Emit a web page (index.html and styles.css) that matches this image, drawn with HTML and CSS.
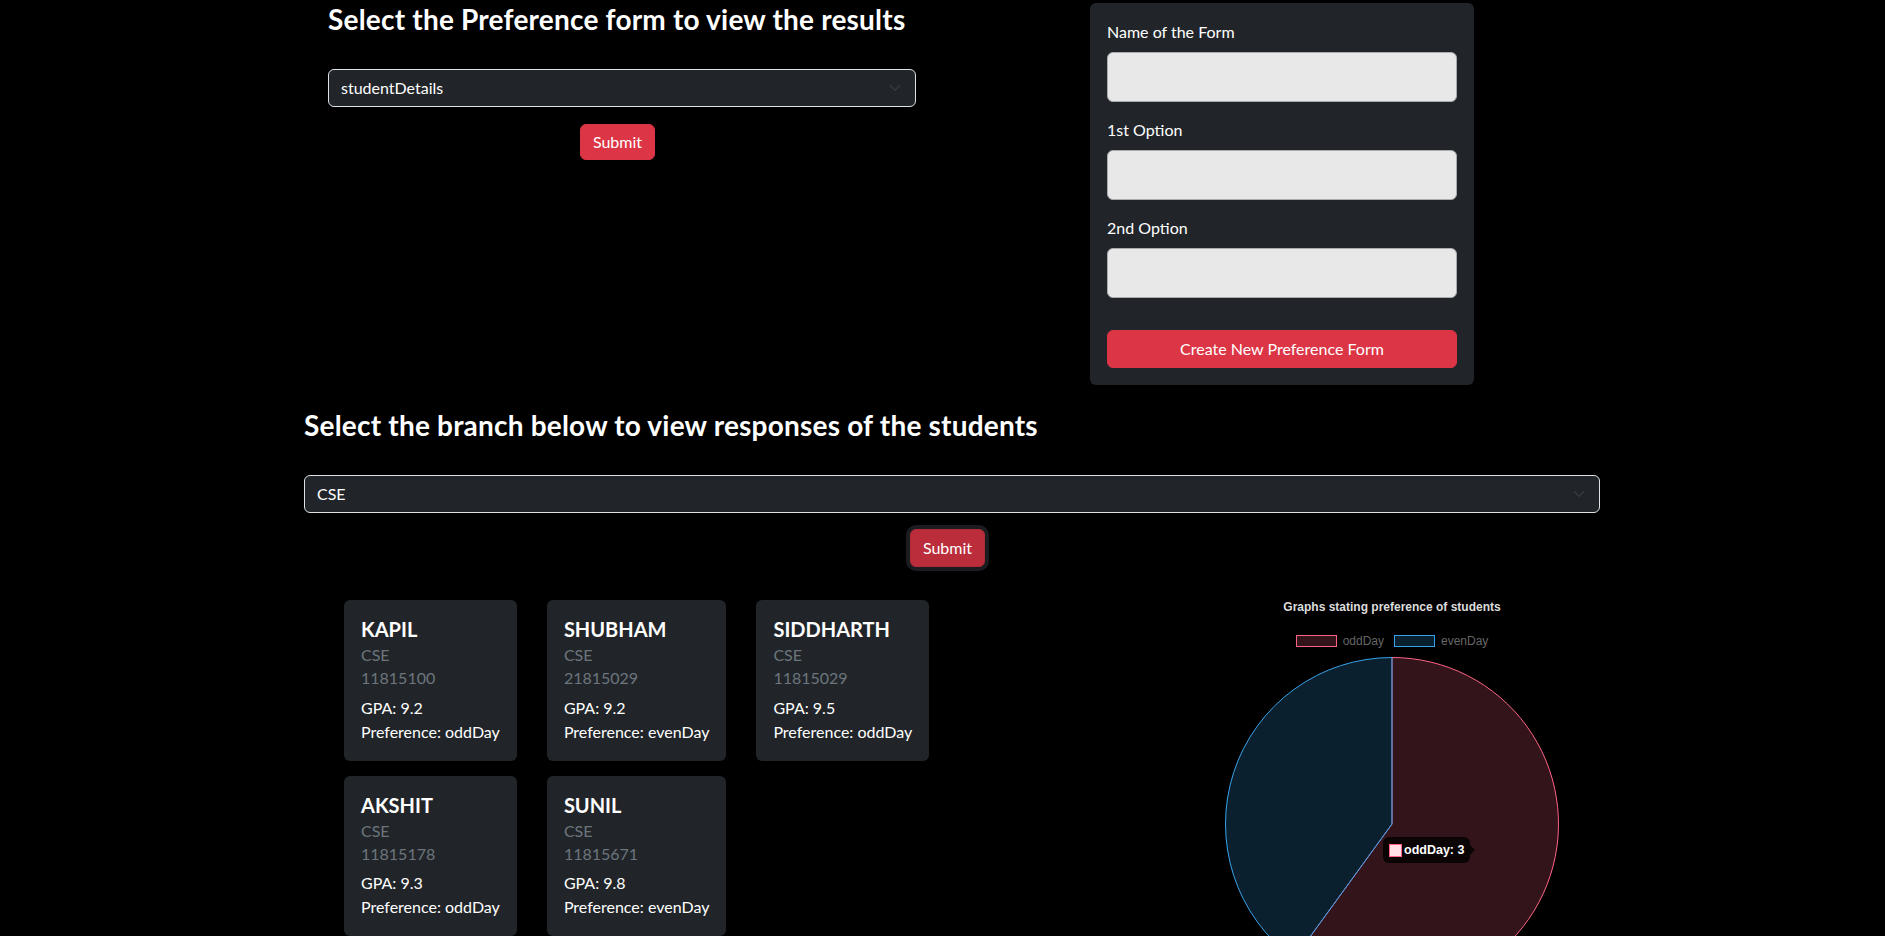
FILE: index.html
```html
<!DOCTYPE html>
<html lang="en">
<head>
<meta charset="utf-8">
<title>Preference Forms</title>
<link rel="stylesheet" href="styles.css">
</head>
<body>
<div class="top">
  <section class="pick">
    <h3 class="heading">Select the Preference form to view the results</h3>
    <div class="select">
      <span>studentDetails</span>
      <svg class="chev" viewBox="0 0 16 16" width="16" height="12"><path d="m2 5 6 6 6-6" fill="none" stroke="#343a40" stroke-width="2" stroke-linecap="round" stroke-linejoin="round"/></svg>
    </div>
    <div class="center pick-actions"><button class="btn btn-red btn-compact" type="button">Submit</button></div>
  </section>
  <form class="new-form">
    <label class="form-label">Name of the Form</label>
    <input class="form-input" type="text">
    <label class="form-label">1st Option</label>
    <input class="form-input" type="text">
    <label class="form-label">2nd Option</label>
    <input class="form-input last" type="text">
    <button class="btn btn-red btn-block" type="button">Create New Preference Form</button>
  </form>
</div>

<section class="branch">
  <h3 class="heading">Select the branch below to view responses of the students</h3>
  <div class="select">
    <span>CSE</span>
    <svg class="chev" viewBox="0 0 16 16" width="16" height="12"><path d="m2 5 6 6 6-6" fill="none" stroke="#343a40" stroke-width="2" stroke-linecap="round" stroke-linejoin="round"/></svg>
  </div>
  <div class="center branch-actions"><button class="btn btn-pressed" type="button">Submit</button></div>
</section>

<div class="results">
  <div class="cards">
    <div class="card">
      <h5 class="card-title">KAPIL</h5>
      <h6 class="card-subtitle">CSE</h6>
      <h6 class="card-subtitle">11815100</h6>
      <p class="card-text">GPA: 9.2</p>
      <p class="card-text">Preference: oddDay</p>
    </div>
    <div class="card">
      <h5 class="card-title">SHUBHAM</h5>
      <h6 class="card-subtitle">CSE</h6>
      <h6 class="card-subtitle">21815029</h6>
      <p class="card-text">GPA: 9.2</p>
      <p class="card-text">Preference: evenDay</p>
    </div>
    <div class="card">
      <h5 class="card-title">SIDDHARTH</h5>
      <h6 class="card-subtitle">CSE</h6>
      <h6 class="card-subtitle">11815029</h6>
      <p class="card-text">GPA: 9.5</p>
      <p class="card-text">Preference: oddDay</p>
    </div>
    <div class="card">
      <h5 class="card-title">AKSHIT</h5>
      <h6 class="card-subtitle">CSE</h6>
      <h6 class="card-subtitle">11815178</h6>
      <p class="card-text">GPA: 9.3</p>
      <p class="card-text">Preference: oddDay</p>
    </div>
    <div class="card">
      <h5 class="card-title">SUNIL</h5>
      <h6 class="card-subtitle">CSE</h6>
      <h6 class="card-subtitle">11815671</h6>
      <p class="card-text">GPA: 9.8</p>
      <p class="card-text">Preference: evenDay</p>
    </div>
  </div>

  <div class="chart">
    <div class="chart-title">Graphs stating preference of students</div>
    <div class="legend">
      <div class="legend-item"><span class="legend-box odd"></span><span>oddDay</span></div>
      <div class="legend-item"><span class="legend-box even"></span><span>evenDay</span></div>
    </div>
    <svg class="pie" width="340" height="340" viewBox="0 0 340 340">
      <path d="M170 170 L170 3.5 A166.5 166.5 0 1 1 72.13 304.7 Z" fill="rgba(255,99,132,0.2)" stroke="rgb(255,99,132)" stroke-width="1"/>
      <path d="M170 170 L72.13 304.7 A166.5 166.5 0 0 1 170 3.5 Z" fill="rgba(54,162,235,0.2)" stroke="rgb(54,162,235)" stroke-width="1"/>
    </svg>
    <div class="tooltip">
      <span class="tip-swatch"></span><span class="tip-text">oddDay: 3</span>
      <span class="tip-caret"></span>
    </div>
  </div>
</div>
</body>
</html>
```

FILE: styles.css
```css
html, body {
  margin: 0;
  background: #000;
}

body {
  color: #fff;
  font-family: Lato, "Noto Sans", sans-serif;
  font-size: 16px;
  line-height: 1.5;
}

.top {
  display: flex;
  align-items: flex-start;
  padding: 3px 0 0 328px;
}

.pick {
  width: 588px;
}

.heading {
  margin: 0 0 32.5px;
  font-size: 28px;
  font-weight: 700;
  line-height: 1.2;
  letter-spacing: 0.2px;
}

.select {
  box-sizing: border-box;
  height: 38px;
  display: flex;
  align-items: center;
  justify-content: space-between;
  padding: 0 12px;
  background: #212529;
  border: 1px solid #dee2e6;
  border-radius: 6px;
  color: #fff;
}

.chev {
  display: block;
}

.center {
  display: flex;
  justify-content: center;
}

.pick-actions {
  margin-top: 17px;
  padding-right: 9px;
}

.btn {
  font-family: inherit;
  font-size: 16px;
  line-height: 24px;
  color: #fff;
  padding: 6px 12px;
  border: 1px solid transparent;
  border-radius: 6px;
  cursor: pointer;
}

.btn-red {
  background: #dc3545;
  border-color: #dc3545;
}

.btn-compact {
  padding: 5px 12px;
}

.btn-block {
  width: 100%;
  height: 38px;
  padding: 0 12px;
}

.btn-pressed {
  background: #bb2d3b;
  border-color: #b02a37;
  box-shadow: 0 0 0 4px #1b1c1f;
}

.new-form {
  box-sizing: border-box;
  width: 384px;
  margin-left: 174px;
  padding: 17px;
  display: flex;
  flex-direction: column;
  background: #212529;
  border-radius: 6px;
}

.form-label {
  line-height: 24px;
  margin-bottom: 8px;
}

.form-input {
  box-sizing: border-box;
  height: 50px;
  margin: 0 0 16px;
  background: #e8e8e8;
  border: 1px solid #a9abae;
  border-radius: 6px;
  font: inherit;
}

.form-input.last {
  margin-bottom: 32px;
}

.branch {
  width: 1296px;
  margin: 24px 0 0 304px;
}

.branch-actions {
  margin-top: 16px;
  padding-right: 9px;
}

.results {
  display: flex;
  align-items: flex-start;
  margin-top: 33px;
  padding-left: 344px;
}

.cards {
  width: 620px;
  display: flex;
  flex-wrap: wrap;
  align-content: flex-start;
  gap: 15px 30px;
}

.card {
  padding: 16px;
  border: 1px solid transparent;
  border-radius: 6px;
  background: #212529;
}

.card-title {
  margin: 0 0 8px;
  font-size: 20px;
  font-weight: 700;
  line-height: 24px;
}

.card-subtitle {
  margin: -4px 0 8px;
  font-size: 16px;
  font-weight: 400;
  line-height: 19.2px;
  color: #6c757d;
}

.card-text {
  margin: 0;
  line-height: 24px;
}

.chart {
  position: relative;
  width: 400px;
  margin-left: 228px;
  font-family: "Liberation Sans", Arial, sans-serif;
}

.chart-title {
  text-align: center;
  font-size: 12px;
  font-weight: 700;
  line-height: 14px;
  color: #dcdcdc;
}

.legend {
  display: flex;
  justify-content: center;
  gap: 10px;
  margin-top: 21px;
  font-size: 12px;
  line-height: 12px;
  color: #666;
}

.legend-item {
  display: flex;
  align-items: center;
  gap: 6px;
}

.legend-box {
  box-sizing: border-box;
  width: 41px;
  height: 12px;
}

.legend-box.odd {
  background: rgba(255, 99, 132, 0.2);
  border: 1px solid rgb(255, 99, 132);
}

.legend-box.even {
  background: rgba(54, 162, 235, 0.2);
  border: 1px solid rgb(54, 162, 235);
}

.pie {
  display: block;
  margin: 7px auto 0;
}

.tooltip {
  position: absolute;
  left: 191px;
  top: 237px;
  height: 26px;
  box-sizing: border-box;
  padding: 0 6px;
  display: flex;
  align-items: center;
  gap: 2px;
  background: rgba(0, 0, 0, 0.8);
  border-radius: 6px;
}

.tip-swatch {
  box-sizing: border-box;
  width: 13px;
  height: 13px;
  background: #ffe0e6;
  border: 1px solid rgb(255, 99, 132);
}

.tip-text {
  font-size: 12.5px;
  font-weight: 700;
  line-height: 14px;
  color: #fff;
}

.tip-caret {
  position: absolute;
  right: -5px;
  top: 8px;
  width: 0;
  height: 0;
  border-top: 5px solid transparent;
  border-bottom: 5px solid transparent;
  border-left: 5px solid rgba(0, 0, 0, 0.8);
}
```
